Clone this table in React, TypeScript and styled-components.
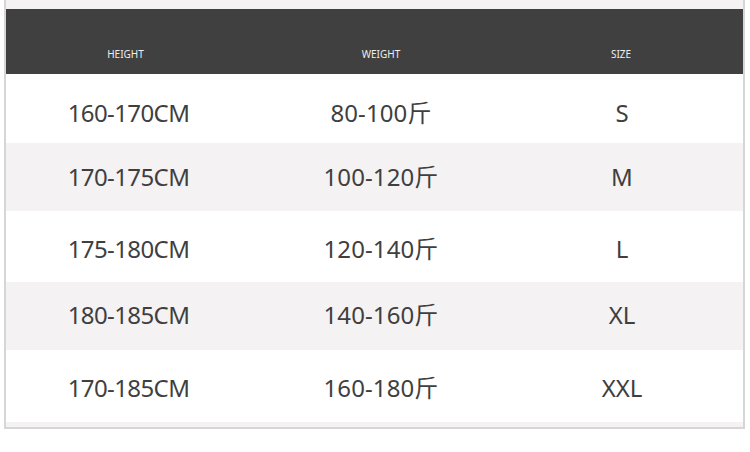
import React from "react";
import styled, { createGlobalStyle } from "styled-components";

const Global = createGlobalStyle`
  html, body { margin: 0; padding: 0; background: #ffffff; }
  body { font-family: "Noto Sans", "Noto Sans CJK SC", sans-serif; }
`;

const Frame = styled.div`
  box-sizing: border-box;
  margin-left: 4px;
  width: 741px;
  background: #f4f2f3;
  border-left: 2px solid #d6d6d6;
  border-right: 2px solid #d6d6d6;
  border-bottom: 2px solid #d6d6d6;
  padding: 9px 0 5px;
`;

const Grid = styled.div`
  display: grid;
  grid-template-columns: 245px 260px 222px;
`;

const Header = styled(Grid)`
  height: 65px;
  background: #404040;
  align-items: end;
  padding-bottom: 13px;
  box-sizing: border-box;
`;

const HeadCell = styled.div<{ $nudge: number }>`
  text-align: center;
  color: #eeeeee;
  font-size: 10px;
  line-height: 14px;
  padding-right: ${(p) => p.$nudge}px;
`;

const Row = styled(Grid)<{ $h: number; $shift: number; $alt: boolean }>`
  box-sizing: border-box;
  height: ${(p) => p.$h}px;
  padding-top: ${(p) => Math.max(0, p.$shift * 2)}px;
  padding-bottom: ${(p) => Math.max(0, -p.$shift * 2)}px;
  align-items: center;
  background: ${(p) => (p.$alt ? "#f4f2f3" : "#ffffff")};
`;

const Cell = styled.div<{ $spacing: number }>`
  text-align: center;
  color: #3f3f3f;
  font-size: 24px;
  letter-spacing: ${(p) => p.$spacing}px;
  line-height: 30px;
`;

const rows = [
  { h: "160-170CM", w: "80-100斤", s: "S", height: 69, shift: 4 },
  { h: "170-175CM", w: "100-120斤", s: "M", height: 68, shift: 0 },
  { h: "175-180CM", w: "120-140斤", s: "L", height: 71, shift: 2 },
  { h: "180-185CM", w: "140-160斤", s: "XL", height: 68, shift: -1 },
  { h: "170-185CM", w: "160-180斤", s: "XXL", height: 72, shift: 2 },
];

export default function App() {
  return (
    <>
      <Global />
      <Frame>
        <Header>
          <HeadCell $nudge={6}>HEIGHT</HeadCell>
          <HeadCell $nudge={0}>WEIGHT</HeadCell>
          <HeadCell $nudge={2}>SIZE</HeadCell>
        </Header>
        {rows.map((r, i) => (
          <Row key={i} $h={r.height} $shift={r.shift} $alt={i % 2 === 1}>
            <Cell $spacing={-0.6}>{r.h}</Cell>
            <Cell $spacing={0.1}>{r.w}</Cell>
            <Cell $spacing={0}>{r.s}</Cell>
          </Row>
        ))}
      </Frame>
    </>
  );
}
